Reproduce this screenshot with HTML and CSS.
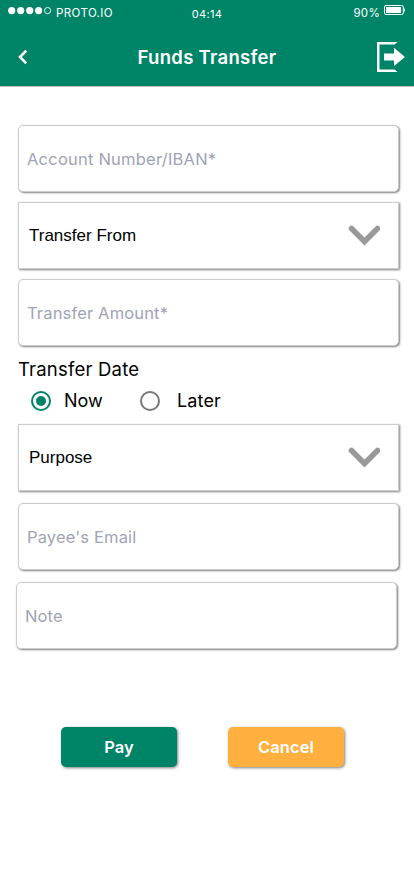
FILE: index.html
```html
<!DOCTYPE html>
<html lang="en">
<head>
<meta charset="utf-8">
<title>Funds Transfer</title>
<link rel="stylesheet" href="styles.css">
</head>
<body>
<header class="header">
  <div class="status">
    <div class="carrier">
      <svg width="44" height="8" viewBox="0 0 44 8"><g fill="#fff"><circle cx="3.7" cy="3.6" r="3.6"/><circle cx="12.7" cy="3.6" r="3.6"/><circle cx="21.7" cy="3.6" r="3.6"/><circle cx="30.6" cy="3.6" r="3.6"/></g><circle cx="39.6" cy="3.6" r="3.1" fill="none" stroke="#fff" stroke-width=".9"/></svg>
      <span class="carrier-name">PROTO.IO</span>
    </div>
    <span class="time">04:14</span>
    <div class="power">
      <span class="percent">90%</span>
      <svg width="21" height="10" viewBox="0 0 21 10"><rect x=".5" y=".5" width="18.8" height="9" rx="1.6" fill="none" stroke="#fff"/><rect x="2" y="2" width="15" height="6" fill="#fff"/><path d="M20 3.2q1 1.8 0 3.6z" fill="#fff" stroke="#fff" stroke-width=".5"/></svg>
    </div>
  </div>
  <nav class="nav">
    <svg class="back" width="10" height="16" viewBox="0 0 10 16"><path d="M9.200 1.700 3 8l6.200 6.300" fill="none" stroke="#fff" stroke-width="2.6"/></svg>
    <h1 class="title">Funds Transfer</h1>
    <svg class="exit" width="29" height="30" viewBox="0 0 29 30"><path d="M20.500 0H0v30h20.500l-3-2.500H2.500V2.500h15z" fill="#fff"/><path d="M7 11.500h10V5.700L28 15 17 24v-5.500H7z" fill="#fff"/></svg>
  </nav>
</header>
<main class="form">
  <div class="field"><span class="hint account">Account Number/IBAN*</span></div>
  <div class="field select"><span>Transfer From</span><svg width="32" height="21" viewBox="0 0 32 21"><path d="M3.500 3.500 16.500 16.500 29.500 3.500" fill="none" stroke="#999" stroke-width="5.6" stroke-linecap="round"/></svg></div>
  <div class="field"><span class="hint">Transfer Amount*</span></div>
  <section class="date">
    <h2 class="label">Transfer Date</h2>
    <div class="options">
      <span class="radio checked"></span><span class="now">Now</span>
      <span class="radio"></span><span class="later">Later</span>
    </div>
  </section>
  <div class="field select purpose"><span>Purpose</span><svg width="32" height="21" viewBox="0 0 32 21"><path d="M3.500 3.500 16.500 16.500 29.500 3.500" fill="none" stroke="#999" stroke-width="5.6" stroke-linecap="round"/></svg></div>
  <div class="field"><span class="hint">Payee's Email</span></div>
  <div class="field note"><span class="hint">Note</span></div>
  <div class="actions">
    <button class="button pay">Pay</button>
    <button class="button cancel">Cancel</button>
  </div>
</main>
</body>
</html>
```
FILE: styles.css
```css
* { box-sizing: border-box; }
body { margin: 0; height: 896px; background: #fff; color: #000; font-family: Inter, "Liberation Sans", sans-serif; overflow: hidden; }
svg { display: block; flex: none; }
span, h1, h2 { white-space: nowrap; }
.header { height: 87px; background: #008468; border-bottom: 1px solid #bcbcbc; color: #fff; }
.status { height: 27px; display: grid; grid-template-columns: 1fr auto 1fr; padding: 0 9px 0 8px; font-size: 11.5px; line-height: 14px; }
.carrier { display: flex; gap: 4px; padding-top: 7px; }
.carrier-name { letter-spacing: .4px; margin-top: -1px; }
.time { padding: 7px 0 0 1px; font-size: 11px; letter-spacing: .3px; }
.power { display: flex; justify-content: flex-end; gap: 4px; padding-top: 5px; }
.percent { letter-spacing: .3px; padding-top: 1px; }
.nav { height: 60px; display: flex; align-items: center; justify-content: space-between; padding: 0 8px 0 17px; }
.title { margin: 0; padding-left: 10px; font-size: 18.5px; font-weight: 600; letter-spacing: .3px; line-height: 22px; }
.form { padding: 38px 15px 0 18px; }
.field { height: 67px; width: 381px; margin-bottom: 10px; display: flex; align-items: center; padding: 1px 8px 0; border: 1px solid #ccc; border-radius: 5px; background: #fff; box-shadow: 1px 1px 2px rgba(0,0,0,.5); }
.hint { color: #a0a3b5; font-size: 16.5px; line-height: 20px; letter-spacing: .15px; }
.account { letter-spacing: .22px; }
.select { justify-content: space-between; border-radius: 0; padding: 0 18px 0 10px; font: 17px/20px "Liberation Sans", sans-serif; }
.select svg { margin-top: -1px; }
.date { height: 68px; }
.label { margin: 0; padding-top: 2px; font-size: 18.5px; font-weight: 400; line-height: 22px; letter-spacing: .2px; }
.options { display: flex; align-items: center; height: 22px; margin: 10px 0 0 13px; font-size: 18px; line-height: 20px; }
.radio { width: 20px; height: 20px; border: 2px solid #777; border-radius: 50%; display: grid; place-items: center; }
.checked { border-color: #008468; }
.checked::after { content: ""; width: 10px; height: 10px; border-radius: 50%; background: #008468; }
.now { width: 76px; margin-left: 13px; }
.later { margin-left: 17px; letter-spacing: .15px; }
.purpose { margin-bottom: 12px; }
.purpose + .field { margin-bottom: 12px; }
.note { margin-left: -2px; }
.actions { display: flex; gap: 51px; margin: 78px 0 0 43px; }
.button { height: 40px; width: 116px; border: 0; padding: 0; border-radius: 5px; color: #fff; font: 600 16.5px/20px Inter, sans-serif; letter-spacing: .1px; box-shadow: 1px 1px 3px rgba(0,0,0,.5); }
.pay { background: #008468; }
.cancel { background: #ffb03f; }
```
